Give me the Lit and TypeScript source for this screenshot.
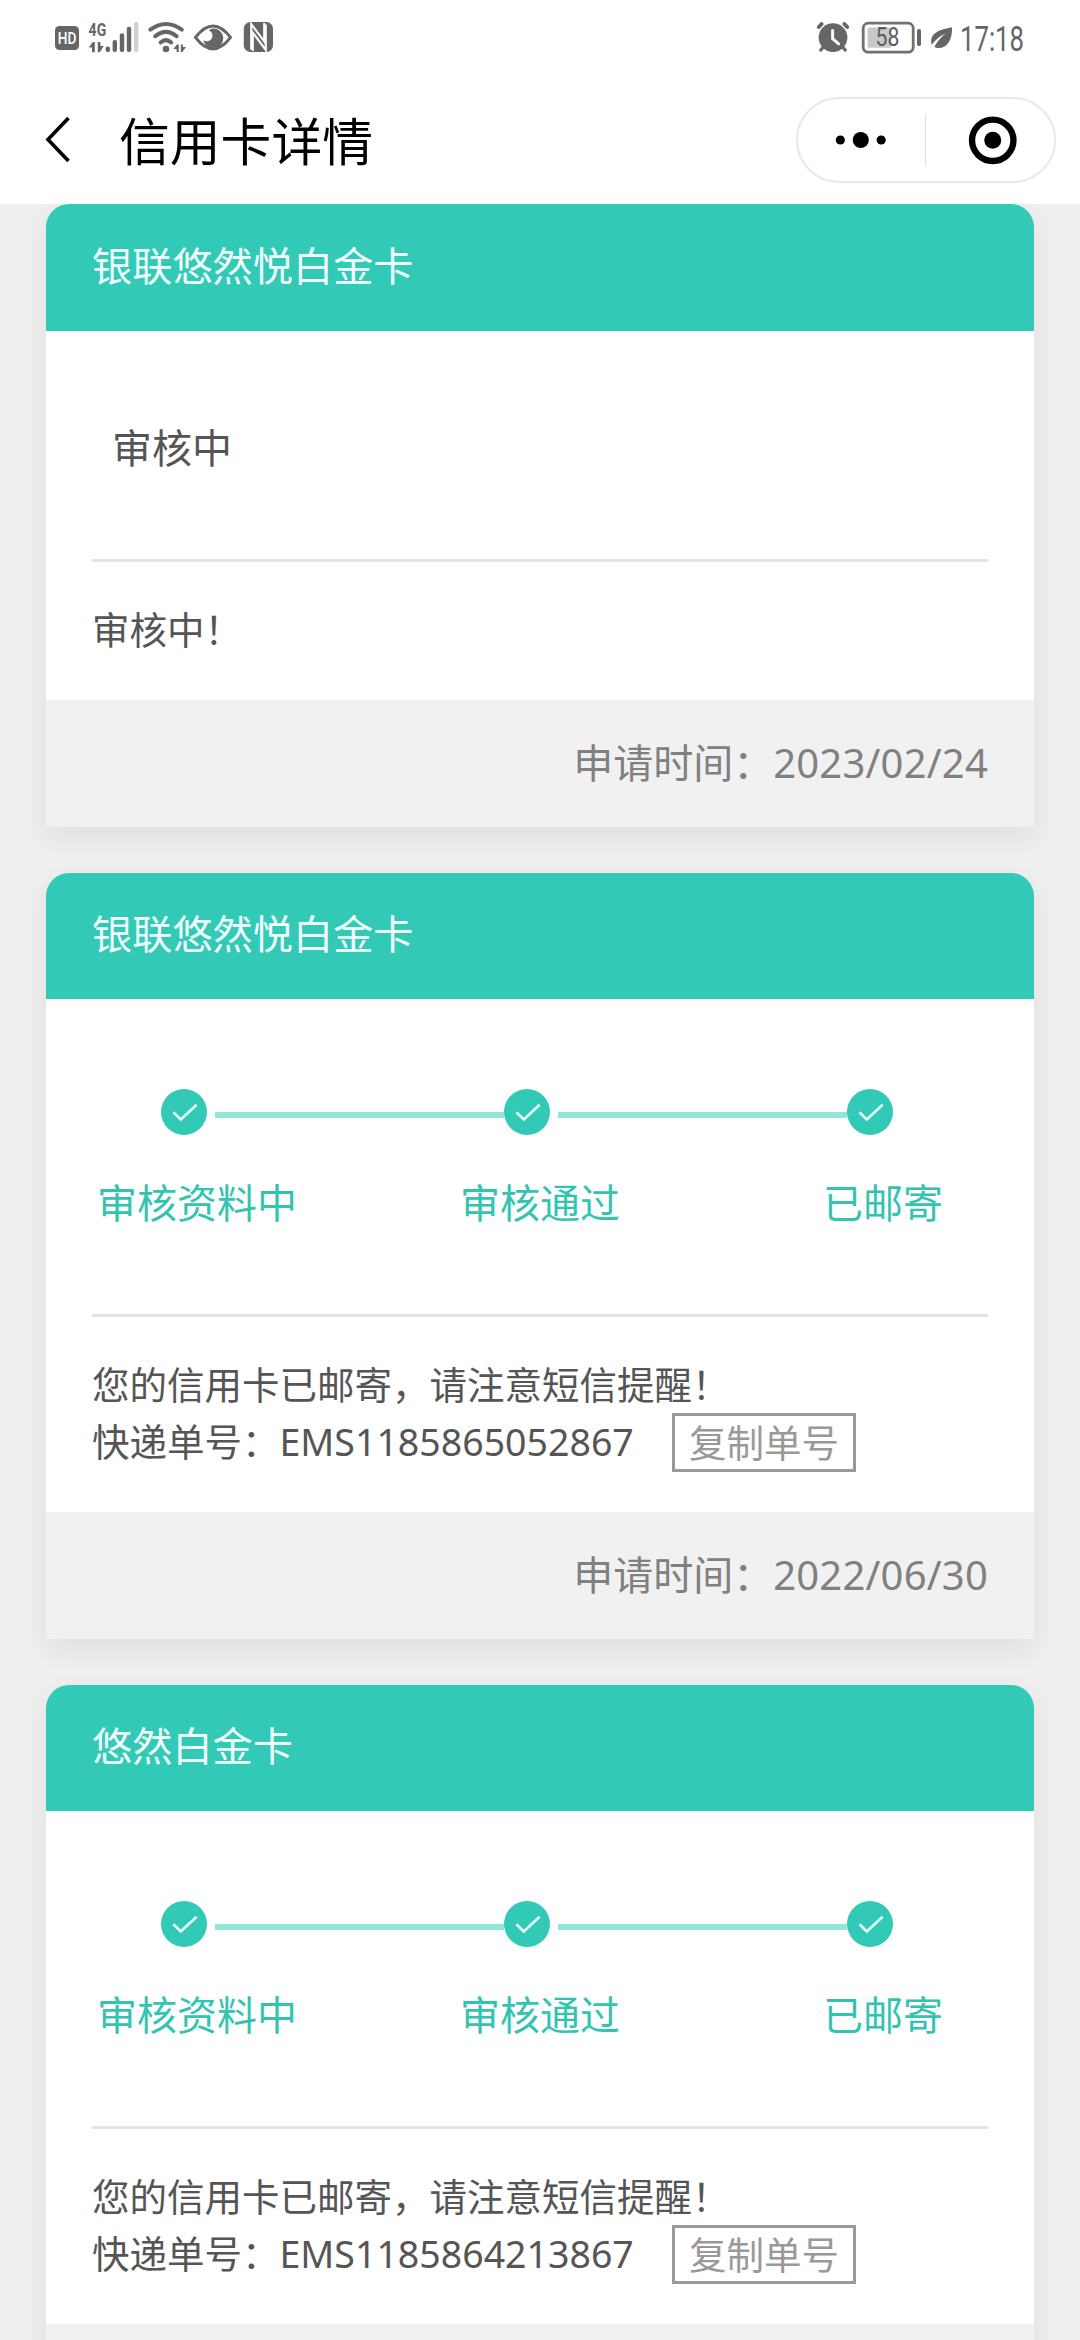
import { LitElement, html, css, nothing } from "lit";
import { customElement, property } from "lit/decorators.js";

interface CardApplication {
  name: string;
  steps: string[];
  message: string;
  tracking?: string;
  date?: string;
}

const APPLICATIONS: CardApplication[] = [
  { name: "银联悠然悦白金卡", steps: [], message: "审核中！", date: "2023/02/24" },
  {
    name: "银联悠然悦白金卡",
    steps: ["审核资料中", "审核通过", "已邮寄"],
    message: "您的信用卡已邮寄，请注意短信提醒！",
    tracking: "EMS1185865052867",
    date: "2022/06/30",
  },
  {
    name: "悠然白金卡",
    steps: ["审核资料中", "审核通过", "已邮寄"],
    message: "您的信用卡已邮寄，请注意短信提醒！",
    tracking: "EMS1185864213867",
  },
];

@customElement("status-bar")
export class StatusBar extends LitElement {
  static styles = css`
    :host {
      display: flex;
      justify-content: space-between;
      height: 76px;
      padding: 0 44px 0 50px;
      box-sizing: border-box;
    }
    svg {
      display: block;
      flex: none;
      overflow: visible;
      font-family: Roboto, "Noto Sans", sans-serif;
    }
  `;

  render() {
    return html`
      <svg width="230" height="76" viewBox="50 0 230 76" fill="#666">
        <rect x="55" y="26" width="24" height="24" rx="4.5" />
        <text x="57.8" y="44" font-size="16" font-weight="500" fill="#fff" textLength="18.6" lengthAdjust="spacingAndGlyphs">HD</text>
        <text x="88.6" y="35.6" font-size="19" font-weight="700" textLength="17.6" lengthAdjust="spacingAndGlyphs">4G</text>
        <path d="M94.8 42 V52.2 H92 V47.6 H88.8 L92.8 42 Z" />
        <path d="M97.8 42 H100.4 V46 H103.8 L99.8 52.2 H97.8 Z" />
        <g>
          <rect x="105.6" y="46.5" width="4.4" height="5.5" rx="2" />
          <rect x="112.6" y="40" width="4.4" height="12" rx="2" />
          <rect x="119.8" y="33.3" width="4.4" height="18.7" rx="2" />
          <rect x="126.8" y="26.8" width="4.4" height="25.2" rx="2" />
          <rect x="134" y="22" width="4.4" height="30" rx="2" fill="#d0d0d0" />
        </g>
        <g fill="none" stroke="#666" stroke-width="4" stroke-linecap="round">
          <path d="M150.3 29.6 Q166 18.4 181.8 29.6" />
          <path d="M155.2 36.2 Q166 27.6 176.6 36.2" />
          <path d="M160.6 42.4 Q166 37.8 171.2 42.4" />
        </g>
        <circle cx="166" cy="49" r="3.3" />
        <path d="M178.8 44.4 V52 H176.6 V49 H173.4 L177 44.4 Z" />
        <path d="M180.8 44.4 H182.8 V47 H186 L182.4 52 H180.8 Z" />
        <path d="M195.4 37.4 Q213 14.4 230.6 37.4 Q213 60.4 195.4 37.4 Z" fill="none" stroke="#666" stroke-width="3" stroke-linejoin="round" />
        <path d="M212.4 28.6 A10 10 0 1 1 203.4 40 A5.6 5.6 0 0 0 212.2 37.4 Q213.4 32 208.8 30.4 Q210.4 29 212.4 28.6 Z" />
        <rect x="243.8" y="22" width="29.2" height="30" rx="6.5" />
        <g fill="none" stroke="#fff" stroke-width="2.1">
          <path d="M251.2 49.5 V24 L264.2 41.4 V23" />
          <path d="M265.8 24.5 V50 L252.8 32.6 V51" />
        </g>
      </svg>
      <svg width="226" height="76" viewBox="810 0 226 76" fill="#666">
        <circle cx="833" cy="37.6" r="14.4" />
        <g stroke="#666" stroke-width="4" stroke-linecap="round">
          <path d="M818.8 27 L821.6 24" />
          <path d="M847.2 27 L844.4 24" />
          <path d="M823.4 47 L820.8 50" stroke-width="3.4" />
          <path d="M842.6 47 L845.2 50" stroke-width="3.4" />
        </g>
        <path d="M832.6 30.4 V38.6 L838.6 43.8" fill="none" stroke="#fff" stroke-width="3" stroke-linecap="round" />
        <rect x="863.2" y="23.2" width="50" height="29" rx="5" fill="none" stroke="#707070" stroke-width="2.8" />
        <rect x="867.6" y="27.6" width="23.6" height="20.2" rx="1.5" fill="#c8c8c8" />
        <rect x="917" y="29" width="4" height="17" rx="1.8" />
        <text x="875.6" y="46.3" font-size="25" textLength="23.8" lengthAdjust="spacingAndGlyphs" fill="#5c5c5c">58</text>
        <path d="M952 27.2 C952.6 40 947 48.4 938 48 Q935.6 48 934.4 46.8 Q938.8 38.4 946 33.2 Q936.4 37.6 931.8 45 Q928.8 36 937.6 31.4 Q942 29.2 952 27.2 Z" />
        <text x="960" y="50.8" font-size="34.5" textLength="64" lengthAdjust="spacingAndGlyphs" fill="#666">17:18</text>
      </svg>
    `;
  }
}

@customElement("nav-bar")
export class NavBar extends LitElement {
  static styles = css`
    :host {
      display: flex;
      align-items: center;
      height: 128px;
      padding: 0 24.5px 0 40px;
      box-sizing: border-box;
    }
    .back {
      width: 36px;
      height: 56px;
    }
    .title {
      flex: 1;
      margin: 3px 0 0 43px;
      font-size: 50.8px;
      line-height: 72px;
      font-weight: 400;
      color: #000;
    }
    .capsule {
      display: flex;
      align-items: center;
      width: 260px;
      height: 86px;
      border: 2px solid #e8e8e8;
      border-radius: 43px;
      box-sizing: border-box;
    }
    .half {
      flex: 1;
      height: 52px;
      display: block;
    }
    .half + .half {
      border-left: 1px solid #ddd;
    }
  `;

  render() {
    return html`
      <svg class="back" viewBox="0 0 36 56" fill="none" stroke="#000" stroke-width="3.6">
        <path d="M28.5 6 L8 27.5 L28.5 49" />
      </svg>
      <h1 class="title">信用卡详情</h1>
      <div class="capsule">
        <svg class="half" viewBox="0 0 128 52">
          <circle cx="42.5" cy="26" r="4.6" />
          <circle cx="63" cy="26" r="8.1" />
          <circle cx="83.5" cy="26" r="4.6" />
        </svg>
        <svg class="half" viewBox="0 0 128 52">
          <circle cx="67" cy="26.3" r="20.8" fill="none" stroke="#000" stroke-width="6.4" />
          <circle cx="67" cy="26.3" r="8.5" />
        </svg>
      </div>
    `;
  }
}

@customElement("progress-steps")
export class ProgressSteps extends LitElement {
  @property({ attribute: false }) steps: string[] = [];

  static styles = css`
    :host {
      display: block;
      padding: 89.8px 5px 0 5px;
    }
    .rail {
      display: flex;
      align-items: center;
      width: 732px;
      margin-left: 64px;
    }
    .dot {
      flex: none;
      width: 46px;
      height: 46px;
    }
    .line {
      flex: 1;
      height: 6px;
      margin: 6px 0 0 8px;
      background: #8fe6d9;
    }
    .labels {
      display: flex;
      justify-content: space-between;
      margin-top: 39px;
    }
    .label {
      width: 200px;
      text-align: center;
      font-size: 40px;
      line-height: 58px;
      color: #32c4b1;
      white-space: nowrap;
    }
  `;

  render() {
    return html`
      <div class="rail">
        ${this.steps.map(
          (_, i) => html`
            ${i > 0 ? html`<span class="line"></span>` : nothing}
            <svg class="dot" viewBox="0 0 46 46">
              <circle cx="23" cy="23" r="23" fill="#32c9b7" />
              <path d="M12.4 23.2 L19.8 30.4 L35.6 15.8" fill="none" stroke="#e6fffb" stroke-width="2.7" />
            </svg>
          `
        )}
      </div>
      <div class="labels">${this.steps.map((s) => html`<span class="label">${s}</span>`)}</div>
    `;
  }
}

@customElement("application-card")
export class ApplicationCard extends LitElement {
  @property({ attribute: false }) item!: CardApplication;

  static styles = css`
    :host {
      display: block;
      background: #fff;
      border-radius: 23px 23px 0 0;
      box-shadow: 0 10px 30px rgba(0, 0, 0, 0.07);
    }
    .head {
      display: flex;
      align-items: center;
      height: 126.4px;
      padding: 0 46px 4px;
      box-sizing: border-box;
      border-radius: 23px 23px 0 0;
      background: #32c9b7;
      color: #f0fffd;
      font-size: 40.2px;
      line-height: 58px;
    }
    .body {
      padding: 0 46px;
    }
    .stage {
      height: 228.2px;
      border-bottom: 3px solid #e3e3e3;
    }
    .stage.tracked {
      height: 314.8px;
    }
    .pending {
      padding: 88px 0 0 20px;
      font-size: 40px;
      line-height: 58px;
      color: #555;
    }
    .note {
      padding: 39.5px 0;
      font-size: 37.5px;
      line-height: 57px;
      height: 138px;
      box-sizing: border-box;
      color: #555;
    }
    .note.tracked {
      height: 195px;
    }
    .row {
      display: flex;
      align-items: center;
      height: 57px;
      white-space: nowrap;
    }
    .copy {
      flex: none;
      width: 184px;
      height: 59px;
      margin: 1px 132px 0 auto;
      padding: 0 14px;
      box-sizing: border-box;
      border: 3px solid #999;
      border-radius: 0;
      background: #fff;
      color: #999;
      font: inherit;
      line-height: 51px;
    }
    .foot {
      display: flex;
      align-items: center;
      justify-content: flex-end;
      height: 126.8px;
      padding: 0 46px 1px;
      box-sizing: border-box;
      background: #f1f1f1;
      color: #808080;
      font-size: 40px;
      line-height: 58px;
    }
    .date {
      letter-spacing: 0.2px;
    }
  `;

  render() {
    const { name, steps, message, tracking, date } = this.item;
    const mod = tracking ? "tracked" : "";
    return html`
      <div class="head">${name}</div>
      <div class="body">
        <div class="stage ${mod}">
          ${steps.length
            ? html`<progress-steps .steps=${steps}></progress-steps>`
            : html`<div class="pending">审核中</div>`}
        </div>
        <div class="note ${mod}">
          <div class="row">${message}</div>
          ${tracking
            ? html`<div class="row">
                <span>快递单号：</span><span>${tracking}</span>
                <button class="copy">复制单号</button>
              </div>`
            : nothing}
        </div>
      </div>
      <div class="foot">
        ${date ? html`<span>申请时间：</span><span class="date">${date}</span>` : nothing}
      </div>
    `;
  }
}

@customElement("app-root")
export class AppRoot extends LitElement {
  static styles = css`
    :host {
      display: flex;
      flex-direction: column;
      width: 1080px;
      height: 2340px;
      overflow: hidden;
      background: #efefef;
      font-family: "Noto Sans", "Noto Sans CJK SC", sans-serif;
    }
    .top {
      flex: none;
      background: #fff;
    }
    .list {
      flex: 1;
      min-height: 0;
      overflow: hidden;
      display: flex;
      flex-direction: column;
      gap: 46px;
      padding: 0.4px 46px 0;
    }
    .list > * {
      flex: none;
    }
  `;

  render() {
    return html`
      <header class="top">
        <status-bar></status-bar>
        <nav-bar></nav-bar>
      </header>
      <main class="list">
        ${APPLICATIONS.map((a) => html`<application-card .item=${a}></application-card>`)}
      </main>
    `;
  }
}
